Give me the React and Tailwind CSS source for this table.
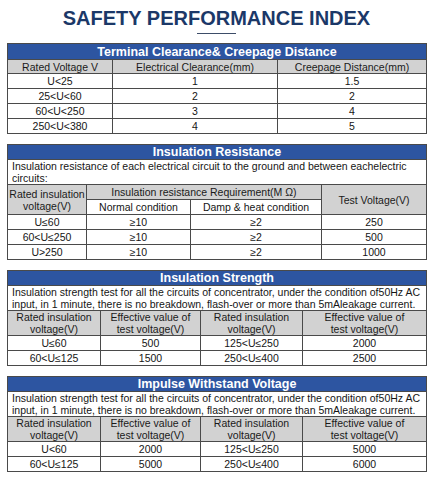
import React from "react";

const B = "border border-[#4a4a4a]";
const cell = `${B} p-0 text-center align-middle text-[10.5px] leading-[12px] text-[#151515] h-[15px] whitespace-nowrap`;
const head = `${B} p-0 text-center align-middle text-[10.5px] leading-[12px] text-[#1a1a1a] bg-[#d2d2d2] whitespace-nowrap`;
const blue = `${B} p-0 text-center align-middle bg-[#2d55a1] text-white font-bold text-[12.5px] leading-[14px] whitespace-nowrap`;
const desc = `${B} px-[4px] py-0 text-left align-middle text-[10.5px] leading-[12px] text-[#151515] h-[25px]`;

function Blue({ span, children, h = "h-[15px]" }) {
  return (
    <tr>
      <td colSpan={span} className={`${blue} ${h}`}>{children}</td>
    </tr>
  );
}

function Desc({ span, lines }) {
  return (
    <tr>
      <td colSpan={span} className={desc}>
        {lines.map((l, i) => (
          <div key={i} className="whitespace-nowrap">{l}</div>
        ))}
      </td>
    </tr>
  );
}

function FourTable({ title, rows }) {
  return (
    <table className="w-[419px] table-fixed border-collapse">
      <colgroup>
        <col className="w-[93px]" />
        <col className="w-[100px]" />
        <col className="w-[102px]" />
        <col className="w-[124px]" />
      </colgroup>
      <tbody>
        <Blue span={4}>{title}</Blue>
        <Desc
          span={4}
          lines={[
            "Insulation strength test for all the circuits of concentrator, under the condition of50Hz AC",
            "input, in 1 minute, there is no breakdown, flash-over or more than 5mAleakage current.",
          ]}
        />
        <tr>
          <td className={`${head} h-[24px]`}>Rated insulation<br />voltage(V)</td>
          <td className={`${head} h-[24px]`}>Effective value of<br />test voltage(V)</td>
          <td className={`${head} h-[24px]`}>Rated insulation<br />voltage(V)</td>
          <td className={`${head} h-[24px]`}>Effective value of<br />test voltage(V)</td>
        </tr>
        {rows.map((r, i) => (
          <tr key={i}>
            {r.map((c, j) => (
              <td key={j} className={cell}>{c}</td>
            ))}
          </tr>
        ))}
      </tbody>
    </table>
  );
}

export default function App() {
  return (
    <div
      className="w-[435px] h-[480px] bg-white pl-[7px] pt-[6px]"
      style={{ fontFamily: '"Liberation Sans", Arial, sans-serif' }}
    >
      <div className="w-[419px] flex flex-col items-center">
        <div className="text-[20px] leading-[24px] font-bold text-[#1b3868] whitespace-nowrap">
          SAFETY PERFORMANCE INDEX
        </div>
        <div className="mt-[3px] w-[39px] h-[1px] bg-[#3d4d68]" />
      </div>

      <div className="mt-[9px] flex flex-col gap-[10px]">
        <table className="w-[419px] table-fixed border-collapse">
          <colgroup>
            <col className="w-[105px]" />
            <col className="w-[165px]" />
            <col className="w-[149px]" />
          </colgroup>
          <tbody>
            <Blue span={3} h="h-[16px]">Terminal Clearance&amp; Creepage Distance</Blue>
            <tr>
              <td className={`${head} h-[14px]`}>Rated Voltage V</td>
              <td className={`${head} h-[14px]`}>Electrical Clearance(mm)</td>
              <td className={`${head} h-[14px] text-[9.5px]`}>Creepage Distance(mm)</td>
            </tr>
            {[
              ["U<25", "1", "1.5"],
              ["25<U<60", "2", "2"],
              ["60<U<250", "3", "4"],
              ["250<U<380", "4", "5"],
            ].map((r, i) => (
              <tr key={i}>
                <td className={cell}>{r[0]}</td>
                <td className={cell}>{r[1]}</td>
                <td className={`${cell} text-[9.5px]`}>{r[2]}</td>
              </tr>
            ))}
          </tbody>
        </table>

        <table className="w-[419px] table-fixed border-collapse">
          <colgroup>
            <col className="w-[79px]" />
            <col className="w-[104px]" />
            <col className="w-[131px]" />
            <col className="w-[105px]" />
          </colgroup>
          <tbody>
            <Blue span={4}>Insulation Resistance</Blue>
            <Desc
              span={4}
              lines={[
                "Insulation resistance of each electrical circuit to the ground and between eachelectric",
                "circuits:",
              ]}
            />
            <tr>
              <td rowSpan={2} className={head}>Rated insulation<br />voltage(V)</td>
              <td colSpan={2} className={`${head} h-[15px]`}>Insulation resistance Requirement(M Ω)</td>
              <td rowSpan={2} className={head}>Test Voltage(V)</td>
            </tr>
            <tr>
              <td className={`${cell} h-[14px]`}>Normal condition</td>
              <td className={`${cell} h-[14px]`}>Damp &amp; heat condition</td>
            </tr>
            {[
              ["U≤60", "≥10", "≥2", "250"],
              ["60<U≤250", "≥10", "≥2", "500"],
              ["U>250", "≥10", "≥2", "1000"],
            ].map((r, i) => (
              <tr key={i}>
                {r.map((c, j) => (
                  <td key={j} className={cell}>{c}</td>
                ))}
              </tr>
            ))}
          </tbody>
        </table>

        <FourTable
          title="Insulation Strength"
          rows={[
            ["U≤60", "500", "125<U≤250", "2000"],
            ["60<U≤125", "1500", "250<U≤400", "2500"],
          ]}
        />

        <FourTable
          title="Impulse Withstand Voltage"
          rows={[
            ["U<60", "2000", "125<U≤250", "5000"],
            ["60<U≤125", "5000", "250<U≤400", "6000"],
          ]}
        />
      </div>
    </div>
  );
}
